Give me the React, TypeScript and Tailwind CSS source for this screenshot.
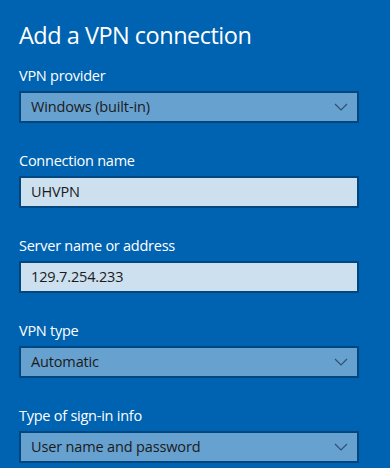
import React from "react";

const font = { fontFamily: '"Open Sans", "Noto Sans", sans-serif' };

function Chevron() {
  return (
    <svg width="14" height="8" viewBox="0 0 14 8" className="shrink-0">
      <polyline points="1,1 7,7 13,1" fill="none" stroke="#33506e" strokeWidth="1.2" />
    </svg>
  );
}

function Field({ label, value, kind }: { label: string; value: string; kind: "select" | "input" }) {
  return (
    <div className="flex flex-col">
      <div className="text-white text-[14.5px] tracking-[-0.25px] leading-[20px] h-[20px]">{label}</div>
      <div
        className={
          "mt-[5px] h-[32px] w-[340px] border-2 border-[#00477f] flex items-center pl-[10px] pr-[9px] text-[14.5px] tracking-[-0.15px] text-[#1b1b1b] " +
          (kind === "select" ? "bg-[#66a1d0]" : "bg-[#cce0ef]")
        }
      >
        <span className="flex-1">{value}</span>
        {kind === "select" && <Chevron />}
      </div>
    </div>
  );
}

export default function App() {
  return (
    <div className="w-[390px] h-[468px] overflow-hidden bg-[#0063b1] pl-[19px] pt-[19px]" style={font}>
      <h1 className="text-white text-[23.5px] tracking-[-0.5px] leading-[32px] font-normal">Add a VPN connection</h1>
      <div className="mt-[15px] flex flex-col gap-[28px]">
        <Field label="VPN provider" value="Windows (built-in)" kind="select" />
        <Field label="Connection name" value="UHVPN" kind="input" />
        <Field label="Server name or address" value="129.7.254.233" kind="input" />
        <Field label="VPN type" value="Automatic" kind="select" />
        <Field label="Type of sign-in info" value="User name and password" kind="select" />
      </div>
    </div>
  );
}
